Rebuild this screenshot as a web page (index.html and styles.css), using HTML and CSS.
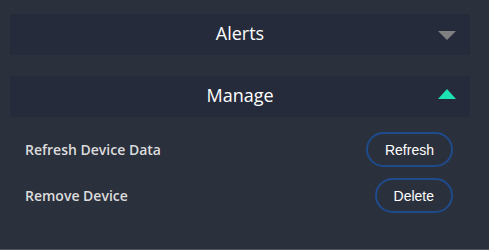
FILE: index.html
```html
<!DOCTYPE html>
<html lang="en">
<head>
    <meta charset="UTF-8">
    <meta name="viewport" content="width=device-width, initial-scale=1.0">
    <title>Device Settings</title>
    <link rel="stylesheet" href="styles.css">
</head>
<body>
    <div class="panels">
        <div class="panel">
            <div class="panel-header">
                <span class="panel-title">Alerts</span>
                <span class="arrow down"></span>
            </div>
        </div>

        <div class="panel open">
            <div class="panel-header">
                <span class="panel-title">Manage</span>
                <span class="arrow up"></span>
            </div>
            <div class="panel-body">
                <div class="row">
                    <span class="label">Refresh Device Data</span>
                    <button class="btn">Refresh</button>
                </div>
                <div class="row">
                    <span class="label">Remove Device</span>
                    <button class="btn">Delete</button>
                </div>
            </div>
        </div>
    </div>
</body>
</html>
```
FILE: styles.css
```css
html, body {
    margin: 0;
    height: 100%;
}
body {
    background-color: #2b303d;
    font-family: "Open Sans", sans-serif;
    box-sizing: border-box;
    border-bottom: 1px solid #50545c;
}
.panels {
    padding: 14px 19px 0 10px;
    display: flex;
    flex-direction: column;
    gap: 21px;
}
.panel-header {
    position: relative;
    height: 41px;
    box-sizing: border-box;
    padding-bottom: 4px;
    background-color: #252b3a;
    display: flex;
    justify-content: center;
    align-items: center;
}
.panel-title {
    color: #fff;
    font-size: 18px;
}
.arrow {
    position: absolute;
    right: 14px;
    width: 0;
    height: 0;
    border-left: 9px solid transparent;
    border-right: 9px solid transparent;
}
.arrow.down {
    border-top: 9px solid #808080;
    top: 17px;
}
.arrow.up {
    border-bottom: 10px solid #1de3b0;
    top: 13px;
}
.panel-body {
    padding: 15px 17px 0 15px;
    display: flex;
    flex-direction: column;
    gap: 11px;
}
.row {
    display: flex;
    justify-content: space-between;
    align-items: center;
}
.label {
    color: #dcdcdc;
    font-size: 14px;
    font-weight: 600;
}
.btn {
    height: 35px;
    padding: 0 17px;
    background: transparent;
    border: 2px solid #1e4b8c;
    border-radius: 18px;
    color: #fff;
    font-family: "Liberation Sans", Arial, sans-serif;
    font-size: 14px;
    cursor: pointer;
}
```
